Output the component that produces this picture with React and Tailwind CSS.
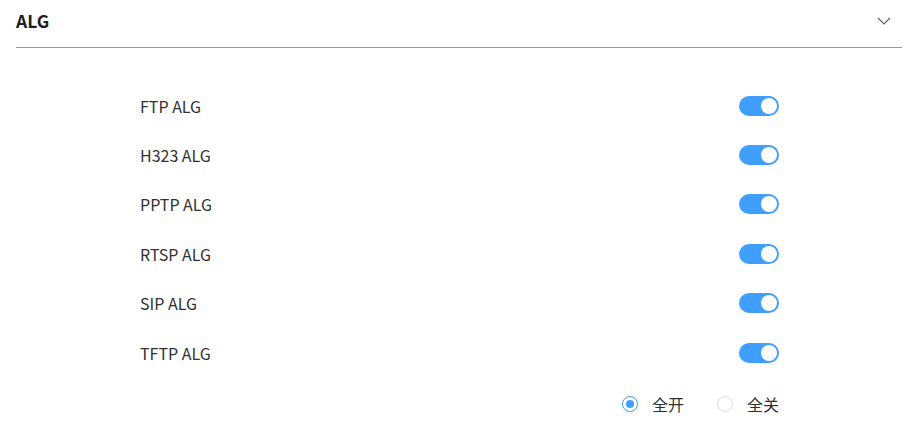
import { useState } from "react";

const ITEMS = ["FTP ALG", "H323 ALG", "PPTP ALG", "RTSP ALG", "SIP ALG", "TFTP ALG"];

function Toggle({ on, onClick }) {
  return (
    <button
      onClick={onClick}
      className={`relative h-5 w-10 rounded-full transition-colors ${on ? "bg-[#409eff]" : "bg-[#dcdfe6]"}`}
    >
      <span
        className={`absolute top-[2px] h-4 w-4 rounded-full bg-white transition-all ${on ? "left-[22px]" : "left-[2px]"}`}
      />
    </button>
  );
}

function Radio({ checked, label, onClick }) {
  return (
    <label onClick={onClick} className="flex cursor-pointer items-center gap-[14px]">
      <span
        className={`flex h-4 w-4 items-center justify-center rounded-full border ${checked ? "border-[#409eff]" : "border-[#dcdfe6]"}`}
      >
        {checked && <span className="h-2 w-2 rounded-full bg-[#409eff]" />}
      </span>
      <span className="text-base text-[#303133]">{label}</span>
    </label>
  );
}

export default function App() {
  const [states, setStates] = useState(ITEMS.map(() => true));
  const allOn = states.every(Boolean);

  return (
    <div
      className="h-[427px] w-[910px] bg-white"
      style={{ fontFamily: '"Noto Sans CJK SC", "Noto Sans", sans-serif' }}
    >
      {/* section header */}
      <div className="ml-4 mr-2 flex h-12 items-center justify-between border-b border-[#999999] pb-[4px]">
        <span className="text-[17.5px] font-bold text-[#1f1f1f]">ALG</span>
        <svg width="14" height="8" viewBox="0 0 14 8" className="mr-[11px] mt-[-2px]" fill="none" stroke="#606266" strokeWidth="1.2">
          <path d="M1 1l6 6 6-6" />
        </svg>
      </div>

      <div className="ml-[140px] w-[639px] pt-[33px]">
        {ITEMS.map((name, i) => (
          <div key={name} className="flex h-[49.4px] items-center justify-between">
            <span className="text-base text-[#303133]">{name}</span>
            <Toggle
              on={states[i]}
              onClick={() => setStates(s => s.map((v, j) => (j === i ? !v : v)))}
            />
          </div>
        ))}
        <div className="mt-[7px] flex h-[40px] items-center justify-end gap-[33px]">
          <Radio checked={allOn} label="全开" onClick={() => setStates(ITEMS.map(() => true))} />
          <Radio checked={!allOn} label="全关" onClick={() => setStates(ITEMS.map(() => false))} />
        </div>
      </div>
    </div>
  );
}
